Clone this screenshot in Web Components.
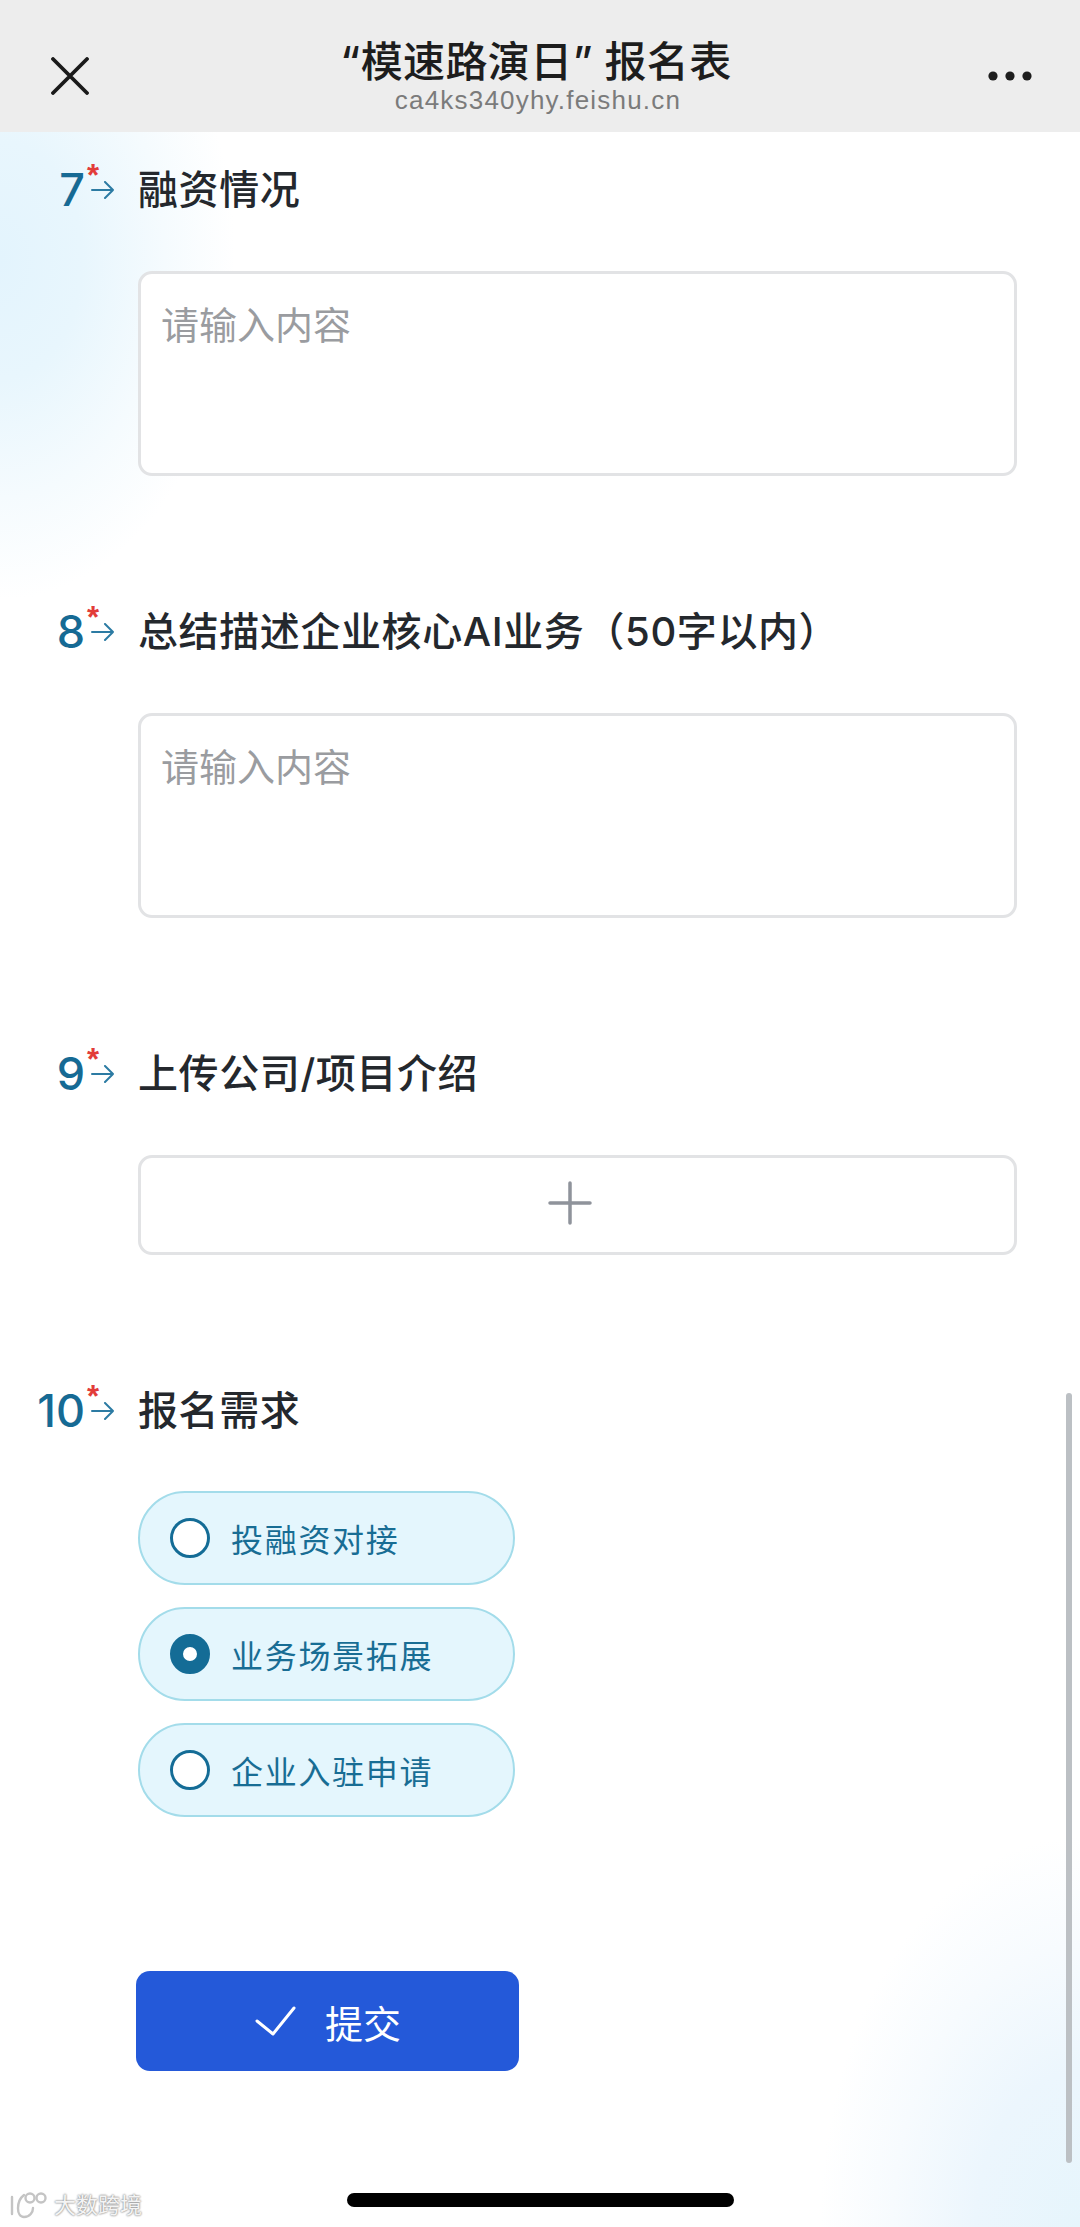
<!DOCTYPE html>
<html lang="zh">
<head>
<meta charset="utf-8">
<title>模速路演日 报名表</title>
<style>
  html, body { margin: 0; padding: 0; }
  body {
    width: 1080px;
    height: 2227px;
    overflow: hidden;
    position: relative;
    background: #fff;
    font-family: Inter, "Noto Sans CJK SC", sans-serif;
  }
</style>
</head>
<body>
<page-backdrop></page-backdrop>
<nav-header title-text="“模速路演日” 报名表" url="ca4ks340yhy.feishu.cn"></nav-header>
<form-body>
  <form-question number="7" label="融资情况" gap="126"><text-box>请输入内容</text-box></form-question>
  <form-question number="8" label="总结描述企业核心AI业务（50字以内）" gap="126"><text-box>请输入内容</text-box></form-question>
  <form-question number="9" label="上传公司/项目介绍" gap="126"><upload-box></upload-box></form-question>
  <form-question number="10" label="报名需求">
    <radio-group>
      <radio-option>投融资对接</radio-option>
      <radio-option checked>业务场景拓展</radio-option>
      <radio-option>企业入驻申请</radio-option>
    </radio-group>
  </form-question>
  <submit-button>提交</submit-button>
</form-body>
<phone-overlay></phone-overlay>

<script>
class PageBackdrop extends HTMLElement {
  constructor() {
    super();
    this.attachShadow({ mode: "open" }).innerHTML = `
      <style>
        :host {
          position: absolute;
          inset: 0;
          display: block;
          background:
            radial-gradient(ellipse 235px 340px at 0 260px, #e3f4fd 0%, #e8f6fd 35%, #f5fbfe 70%, rgba(255,255,255,0) 100%),
            radial-gradient(ellipse 260px 390px at 1080px 2227px, #e6f5fc 0%, #ecf6fd 40%, #f7fbfe 72%, rgba(255,255,255,0) 100%),
            #fff;
        }
      </style>`;
  }
}

class NavHeader extends HTMLElement {
  constructor() {
    super();
    this.attachShadow({ mode: "open" }).innerHTML = `
      <style>
        :host {
          position: relative;
          display: flex;
          align-items: center;
          justify-content: space-between;
          box-sizing: border-box;
          height: 132px;
          padding: 0 48px 0 51px;
          background: #ededed;
        }
        .close, .more { display: block; flex: none; }
        .close { margin-top: 20px; }
        .more { margin-top: 19px; }
        .center {
          position: absolute;
          left: 0;
          right: 0;
          top: 36px;
          text-align: center;
        }
        .title {
          font-size: 42px;
          line-height: 52px;
          font-weight: 500;
          letter-spacing: 0.4px;
          color: #1d1d1d;
          white-space: nowrap;
          transform: translateX(-4px);
        }
        .url {
          font-family: "Liberation Sans", sans-serif;
          font-size: 26px;
          line-height: 28px;
          letter-spacing: 1.2px;
          color: #7b7b7b;
          margin-top: -2px;
          transform: translateX(-2px);
        }
      </style>
      <svg class="close" width="38" height="38" viewBox="0 0 38 38" fill="none" stroke="#1a1a1a" stroke-width="3.8" stroke-linecap="round">
        <path d="M2 2 36 36M36 2 2 36"/>
      </svg>
      <div class="center">
        <div class="title"></div>
        <div class="url"></div>
      </div>
      <svg class="more" width="44" height="12" viewBox="0 0 44 12" fill="#1d1d1d">
        <circle cx="5" cy="6" r="4.6"/><circle cx="22" cy="6" r="4.6"/><circle cx="39" cy="6" r="4.6"/>
      </svg>`;
  }
  connectedCallback() {
    this.shadowRoot.querySelector(".title").textContent = this.getAttribute("title-text");
    this.shadowRoot.querySelector(".url").textContent = this.getAttribute("url");
  }
}

class FormBody extends HTMLElement {
  constructor() {
    super();
    this.attachShadow({ mode: "open" }).innerHTML = `
      <style>
        :host {
          position: relative;
          display: block;
          padding: 28px 63px 0 0;
        }
      </style>
      <slot></slot>`;
  }
}

class FormQuestion extends HTMLElement {
  constructor() {
    super();
    this.attachShadow({ mode: "open" }).innerHTML = `
      <style>
        :host { display: block; }
        .head {
          display: grid;
          grid-template-columns: 138px 1fr;
          height: 60px;
          align-items: center;
        }
        .mark {
          position: relative;
          height: 60px;
          padding-right: 53px;
          text-align: right;
          box-sizing: border-box;
        }
        .num {
          font-family: Inter, sans-serif;
          font-size: 45px;
          line-height: 60px;
          font-weight: 500;
          color: #166a94;
        }
        .star {
          position: absolute;
          left: 87px;
          top: 1px;
          font-family: "Liberation Sans", sans-serif;
          font-size: 31px;
          font-weight: 700;
          line-height: 30px;
          color: #e23c39;
        }
        svg { position: absolute; left: 91px; top: 21px; }
        .label {
          font-size: 40px;
          line-height: 60px;
          font-weight: 500;
          letter-spacing: 0.6px;
          color: #24282d;
          white-space: nowrap;
          margin-top: -1px;
        }
        .body { margin: 51px 0 0 138px; }
      </style>
      <div class="head">
        <div class="mark">
          <span class="num"></span><span class="star">*</span>
          <svg width="23" height="18" viewBox="0 0 23 18" fill="none" stroke="#2c7ba3" stroke-width="2" stroke-linecap="round" stroke-linejoin="round">
            <path d="M1 9H22M14 1l8 8-8 8"/>
          </svg>
        </div>
        <div class="label"></div>
      </div>
      <div class="body"><slot></slot></div>`;
  }
  connectedCallback() {
    this.shadowRoot.querySelector(".num").textContent = this.getAttribute("number");
    this.shadowRoot.querySelector(".label").textContent = this.getAttribute("label");
    if (this.hasAttribute("gap")) this.style.marginBottom = this.getAttribute("gap") + "px";
  }
}

class TextBox extends HTMLElement {
  constructor() {
    super();
    this.attachShadow({ mode: "open" }).innerHTML = `
      <style>
        :host {
          display: block;
          box-sizing: border-box;
          height: 205px;
          padding: 26px 20px;
          background: #fff;
          border: 3px solid #e2e3e5;
          border-radius: 14px;
          font-size: 38px;
          line-height: 50px;
          color: #9a9ca0;
        }
      </style>
      <slot></slot>`;
  }
}

class UploadBox extends HTMLElement {
  constructor() {
    super();
    this.attachShadow({ mode: "open" }).innerHTML = `
      <style>
        :host {
          display: flex;
          align-items: center;
          justify-content: center;
          box-sizing: border-box;
          height: 100px;
          background: #fff;
          border: 3px solid #e2e3e5;
          border-radius: 14px;
        }
        svg { display: block; margin: -4px 0 0 -16px; }
      </style>
      <svg width="44" height="44" viewBox="0 0 44 44" stroke="#8f939b" stroke-width="3.5" stroke-linecap="round">
        <path d="M22 2V42M2 22H42"/>
      </svg>`;
  }
}

class RadioGroup extends HTMLElement {
  constructor() {
    super();
    this.attachShadow({ mode: "open" }).innerHTML = `
      <style>
        :host {
          display: flex;
          flex-direction: column;
          gap: 22px;
          width: 377px;
          margin-top: -1px;
        }
      </style>
      <slot></slot>`;
  }
}

class RadioOption extends HTMLElement {
  constructor() {
    super();
    this.attachShadow({ mode: "open" }).innerHTML = `
      <style>
        :host {
          display: flex;
          align-items: center;
          gap: 21px;
          box-sizing: border-box;
          height: 94px;
          padding-left: 30px;
          background: #e4f6fd;
          border: 2.5px solid #a3dcea;
          border-radius: 47px;
          font-size: 32px;
          letter-spacing: 1.7px;
          color: #186d94;
        }
        .dot {
          flex: none;
          box-sizing: border-box;
          width: 40px;
          height: 40px;
          border: 3px solid #146c96;
          border-radius: 50%;
          background: #fff;
        }
        :host([checked]) .dot { border-width: 13px; }
      </style>
      <span class="dot"></span><slot></slot>`;
  }
}

class SubmitButton extends HTMLElement {
  constructor() {
    super();
    this.attachShadow({ mode: "open" }).innerHTML = `
      <style>
        :host {
          display: flex;
          align-items: center;
          justify-content: center;
          gap: 29px;
          box-sizing: border-box;
          width: 383px;
          height: 100px;
          margin: 154px 0 0 136px;
          background: #2459d9;
          border-radius: 14px;
          font-size: 38px;
          color: #fff;
        }
        svg { display: block; }
      </style>
      <svg width="42" height="30" viewBox="0 0 42 30" fill="none" stroke="#fff" stroke-width="3" stroke-linecap="round" stroke-linejoin="round">
        <path d="M3 15 19 28 40 2"/>
      </svg>
      <slot></slot>`;
  }
}

class PhoneOverlay extends HTMLElement {
  constructor() {
    super();
    this.attachShadow({ mode: "open" }).innerHTML = `
      <style>
        :host { position: absolute; inset: 0; display: block; pointer-events: none; }
        .scroll {
          position: absolute;
          left: 1066px;
          top: 1393px;
          width: 6px;
          height: 770px;
          border-radius: 3px;
          background: #bcc0c4;
        }
        .home {
          position: absolute;
          left: 347px;
          top: 2193px;
          width: 387px;
          height: 14px;
          border-radius: 7px;
          background: #000;
        }
        .mark {
          position: absolute;
          left: 9px;
          top: 2190px;
          display: flex;
          align-items: center;
          gap: 3px;
          font-size: 22px;
          line-height: 30px;
          color: #f4f4f4;
          text-shadow: 0 0 2px #8e8e8e, 0 0 2px #8e8e8e;
        }
        svg { display: block; }
      </style>
      <div class="scroll"></div>
      <div class="home"></div>
      <div class="mark">
        <svg width="42" height="30" viewBox="0 0 42 30" fill="none" stroke="#c4c4c4" stroke-width="2.4" stroke-linecap="round">
          <path d="M3 7V24M15 5C7 11 7 27 15 27 21 27 24 22 24 18"/>
          <circle cx="21" cy="8" r="4.5"/><circle cx="32" cy="8" r="4.5"/>
        </svg>
        <span>大数跨境</span>
      </div>`;
  }
}

customElements.define("page-backdrop", PageBackdrop);
customElements.define("nav-header", NavHeader);
customElements.define("form-body", FormBody);
customElements.define("form-question", FormQuestion);
customElements.define("text-box", TextBox);
customElements.define("upload-box", UploadBox);
customElements.define("radio-group", RadioGroup);
customElements.define("radio-option", RadioOption);
customElements.define("submit-button", SubmitButton);
customElements.define("phone-overlay", PhoneOverlay);
</script>
</body>
</html>
